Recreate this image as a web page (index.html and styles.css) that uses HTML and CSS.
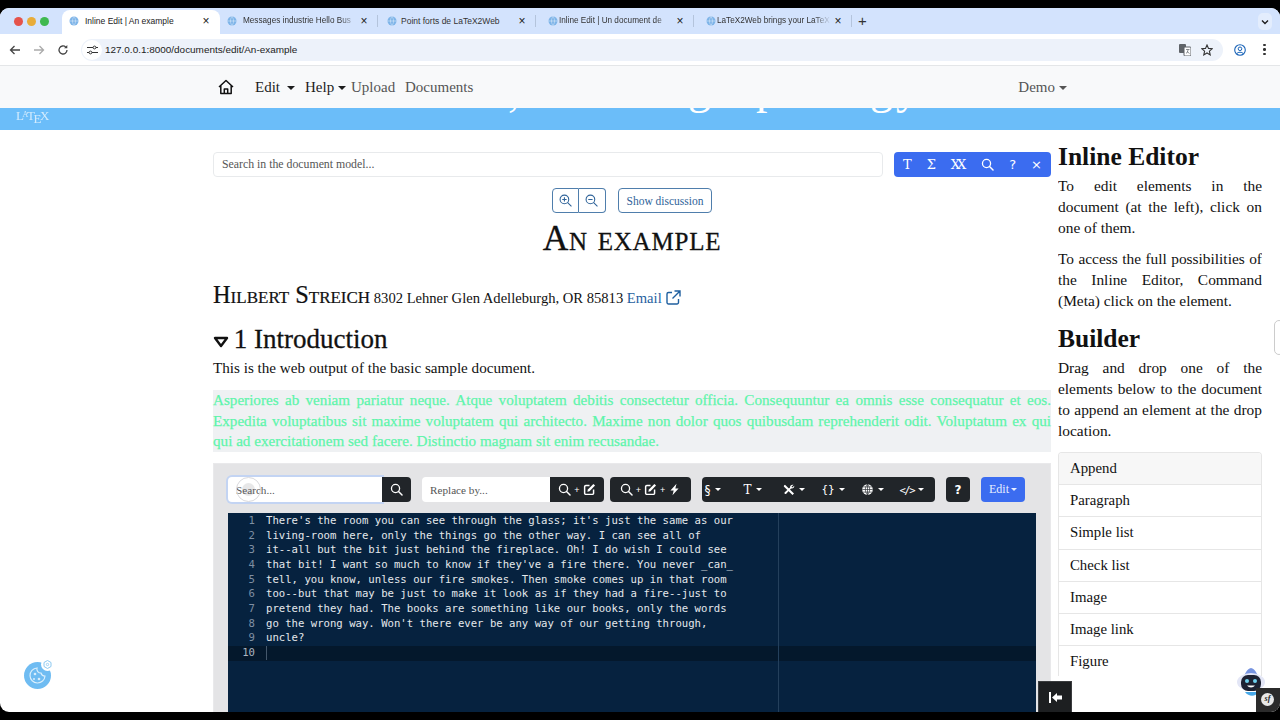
FILE: index.html
```html
<!DOCTYPE html>
<html lang="en">

<head>
	<meta charset="UTF-8" />
	<title>Inline Edit | An example</title>
	<link rel="stylesheet" href="styles.css">
</head>

<body>
	<svg class="sprites" width="0" height="0">
		<symbol id="search" viewBox="0 0 16 16">
			<circle cx="6.800" cy="6.800" r="5" fill="none" stroke="currentColor" stroke-width="1.600" />
			<path d="M10.500 10.500 14.800 14.800" stroke="currentColor" stroke-width="1.800" stroke-linecap="round" />
		</symbol>
		<symbol id="edit" viewBox="0 0 16 16">
			<path d="M8 3H3.500A1.500 1.500 0 0 0 2 4.500V12.500A1.500 1.500 0 0 0 3.500 14H11.500A1.500 1.500 0 0 0 13 12.500V8" fill="none" stroke="currentColor" stroke-width="1.800" />
			<path d="M12.800 1.200 14.800 3.200 8 10 5.300 10.700 6 8Z" fill="currentColor" />
		</symbol>
		<symbol id="bolt" viewBox="0 0 16 16">
			<path d="M10.500 1 3 9.200H7L5.500 15 13 6.800H9Z" fill="currentColor" />
		</symbol>
		<symbol id="globe-web" viewBox="0 0 16 16">
			<circle cx="8" cy="8" r="6.500" fill="currentColor" />
			<path d="M1.500 8H14.500M8 1.500V14.500M2.500 4.800H13.500M2.500 11.200H13.500M8 1.500C4.500 5 4.500 11 8 14.500M8 1.500C11.500 5 11.500 11 8 14.500" fill="none" stroke="#212529" stroke-width=".8" />
		</symbol>
		<symbol id="tab-globe" viewBox="0 0 10 10">
			<circle cx="5" cy="5" r="4.500" fill="#7db4e8" />
			<path d="M.5 5H9.500M5 .5C3 3 3 7 5 9.500M5 .5C7 3 7 7 5 9.500" fill="none" stroke="#d9e8f8" stroke-width=".6" />
		</symbol>
	</svg>

	<div class="window">
		<div class="tabstrip">
			<div class="lights">
				<span class="light red"></span>
				<span class="light yellow"></span>
				<span class="light green"></span>
			</div>
			<div class="tab active">
				<svg class="favicon"><use href="#tab-globe" /></svg>
				<span class="tab-title">Inline Edit | An example</span>
				<span class="tab-close">×</span>
			</div>
			<div class="tab">
				<svg class="favicon"><use href="#tab-globe" /></svg>
				<span class="tab-title faded">Messages industrie Hello Bus</span>
				<span class="tab-close">×</span>
			</div>
			<div class="tab third">
				<svg class="favicon"><use href="#tab-globe" /></svg>
				<span class="tab-title">Point forts de LaTeX2Web</span>
				<span class="tab-close">×</span>
			</div>
			<div class="tab shifted">
				<svg class="favicon"><use href="#tab-globe" /></svg>
				<span class="tab-title faded">Inline Edit | Un document de</span>
				<span class="tab-close">×</span>
			</div>
			<div class="tab shifted">
				<svg class="favicon"><use href="#tab-globe" /></svg>
				<span class="tab-title faded">LaTeX2Web brings your LaTeX</span>
				<span class="tab-close">×</span>
			</div>
			<span class="new-tab">+</span>
			<span class="tab-menu">
				<svg width="8" height="6" viewBox="0 0 8 6"><path d="M1 1.500 4 4.500 7 1.500" fill="none" stroke="#1f1f1f" stroke-width="1.400" /></svg>
			</span>
		</div>

		<div class="toolbar">
			<svg class="tool-icon" width="12" height="12" viewBox="0 0 12 12"><path d="M11 6H1.500M5.500 2 1.500 6 5.500 10" fill="none" stroke="#444" stroke-width="1.300" /></svg>
			<svg class="tool-icon" width="12" height="12" viewBox="0 0 12 12"><path d="M1 6H10.500M6.500 2 10.500 6 6.500 10" fill="none" stroke="#aaa" stroke-width="1.300" /></svg>
			<svg class="tool-icon" width="12" height="12" viewBox="0 0 12 12"><path d="M10 6A4 4 0 1 1 8.800 3.100" fill="none" stroke="#444" stroke-width="1.300" /><path d="M10.300 1V4.200H7.100Z" fill="#444" /></svg>
			<div class="omnibox">
				<span class="site-info">
					<svg width="11" height="10" viewBox="0 0 11 10"><path d="M0 2.500H6M9 2.500H11M0 7.500H2M5 7.500H11" stroke="#333" stroke-width="1.100" /><circle cx="7.500" cy="2.500" r="1.400" fill="none" stroke="#333" /><circle cx="3.500" cy="7.500" r="1.400" fill="none" stroke="#333" /></svg>
				</span>
				<span class="url">127.0.0.1:8000/documents/edit/An-example</span>
				<svg class="omni-icon" width="12" height="12" viewBox="0 0 12 12"><rect x="0" y="0" width="7" height="9" rx="1" fill="#5f6368" /><rect x="5" y="3" width="7" height="9" rx="1" fill="#fff" stroke="#5f6368" /><path d="M7 5.500H10.500M9 5.500C9 7.500 8 9 7 9.500M8 7.500 10.500 9.500" stroke="#5f6368" stroke-width=".7" fill="none" /></svg>
				<svg class="omni-icon" width="12" height="12" viewBox="0 0 12 12"><path d="M6 1 7.500 4.400 11.200 4.800 8.400 7.200 9.200 10.900 6 9 2.800 10.900 3.600 7.200 .8 4.800 4.500 4.400Z" fill="none" stroke="#333" stroke-width="1.100" /></svg>
			</div>
			<svg class="profile" width="12" height="12" viewBox="0 0 12 12"><circle cx="6" cy="6" r="5.300" fill="none" stroke="#1a64b8" stroke-width="1.100" /><circle cx="6" cy="4.800" r="1.800" fill="none" stroke="#1a64b8" /><path d="M2.800 9.500C4 7.800 8 7.800 9.200 9.500" fill="none" stroke="#1a64b8" /></svg>
			<span class="dots"><i></i><i></i><i></i></span>
		</div>

		<nav class="navbar">
			<svg class="home" width="16" height="16" viewBox="0 0 16 16"><path d="M1 8 8 1.500 15 8M2.800 6.800V14.500H13.200V6.800M6.300 14.500V10H9.700V14.500" fill="none" stroke="#111" stroke-width="1.500" stroke-linejoin="round" /></svg>
			<span class="nav-item dark edit-item">Edit<i class="caret"></i></span>
			<span class="nav-item dark help-item">Help<i class="caret"></i></span>
			<span class="nav-item upload-item">Upload</span>
			<span class="nav-item">Documents</span>
			<span class="nav-item demo-item">Demo<i class="caret"></i></span>
		</nav>

		<header class="hero">
			<span class="latex-logo">L<sup>A</sup>T<sub>E</sub>X</span>
			<span class="hero-clip comma">,</span>
			<span class="hero-clip gee-one">g</span>
			<span class="hero-clip pee">p</span>
			<span class="hero-clip gee-two">g</span>
			<span class="hero-clip wye">y</span>
		</header>

		<div class="page">
			<main class="doc">
				<div class="model-row">
					<input class="model-search" type="text" placeholder="Search in the document model...">
					<div class="blue-bar">
						<span>T</span><span>Σ</span><span class="tight">XX</span>
						<svg width="13" height="13"><use href="#search" /></svg>
						<span class="sans">?</span><span class="sans">×</span>
					</div>
				</div>

				<div class="zoom-row">
					<div class="btn-group">
						<button class="outline-btn square">
							<svg width="13" height="13" viewBox="0 0 12 12"><circle cx="5" cy="5" r="4" fill="none" stroke="currentColor" stroke-width="1" /><path d="M8 8 11.500 11.500M3 5H7M5 3V7" stroke="currentColor" stroke-width="1" /></svg>
						</button>
						<button class="outline-btn square">
							<svg width="13" height="13" viewBox="0 0 12 12"><circle cx="5" cy="5" r="4" fill="none" stroke="currentColor" stroke-width="1" /><path d="M8 8 11.500 11.500M3 5H7" stroke="currentColor" stroke-width="1" /></svg>
						</button>
					</div>
					<button class="outline-btn">Show discussion</button>
				</div>

				<h1 class="doc-title">An example</h1>

				<p class="author">
					<span class="author-name">Hilbert Streich</span>
					8302 Lehner Glen Adelleburgh, OR 85813
					<a class="mail">Email
						<svg width="15" height="15" viewBox="0 0 15 15"><path d="M6 2.500H2.500A1.500 1.500 0 0 0 1 4V12.500A1.500 1.500 0 0 0 2.500 14H11A1.500 1.500 0 0 0 12.500 12.500V9M8.500 1H14V6.500M14 1 6.500 8.500" fill="none" stroke="currentColor" stroke-width="1.400" /></svg>
					</a>
				</p>

				<h2 class="section-title">
					<svg width="16" height="12" viewBox="0 0 16 12"><path d="M2 2H14L8 10Z" fill="none" stroke="#111" stroke-width="2.400" stroke-linejoin="round" /></svg>
					1 Introduction
				</h2>
				<p class="intro">This is the web output of the basic sample document.</p>

				<p class="selected-par">Asperiores ab veniam pariatur neque. Atque voluptatem debitis consectetur officia. Consequuntur ea omnis esse consequatur et eos. Expedita voluptatibus sit maxime voluptatem qui architecto. Maxime non dolor quos quibusdam reprehenderit odit. Voluptatum ex qui qui ad exercitationem sed facere. Distinctio magnam sit enim recusandae.</p>

				<section class="editor">
					<div class="editor-tools">
						<div class="field-group search-group">
							<input class="field focused" type="text" placeholder="Search...">
							<button class="dark-btn"><svg width="13" height="13"><use href="#search" /></svg></button>
							<span class="ripple"></span>
						</div>
						<div class="field-group replace">
							<input class="field" type="text" placeholder="Replace by...">
							<button class="dark-btn">
								<svg width="13" height="13"><use href="#search" /></svg><b>+</b><svg width="13" height="13"><use href="#edit" /></svg>
							</button>
						</div>
						<button class="dark-btn all">
							<svg width="13" height="13"><use href="#search" /></svg><b>+</b><svg width="13" height="13"><use href="#edit" /></svg><b>+</b><svg width="13" height="13"><use href="#bolt" /></svg>
						</button>
						<div class="dark-btn menus">
							<span class="menu"><span class="sans">§</span><i class="caret"></i></span>
							<span class="menu"><span class="tee">T</span><i class="caret"></i></span>
							<span class="menu">
								<svg width="12" height="12" viewBox="0 0 12 12"><path d="M1 1.500 2 .8 11 9.500 9.500 11 .8 2.500ZM10.500 .8 8.500 2.800 9.200 3.500 11.300 1.800C11.500 3.500 10 5 8 4.500L3 10A1.300 1.300 0 0 1 1.500 8.500L7 3.500C6.800 1.800 8.500 .3 10.500 .8Z" fill="currentColor" /></svg>
								<i class="caret"></i>
							</span>
							<span class="menu"><span class="mono">{}</span><i class="caret"></i></span>
							<span class="menu"><svg width="13" height="13"><use href="#globe-web" /></svg><i class="caret"></i></span>
							<span class="menu"><span class="mono tag">&lt;/&gt;</span><i class="caret"></i></span>
						</div>
						<button class="dark-btn help">?</button>
						<button class="edit-btn">Edit<i class="caret"></i></button>
					</div>

					<div class="code">
						<div class="gutter">
							<span>1</span><span>2</span><span>3</span><span>4</span><span>5</span><span>6</span><span>7</span><span>8</span><span>9</span><span class="current">10</span>
						</div>
						<div class="lines">
							<div>There's the room you can see through the glass; it's just the same as our</div>
							<div>living-room here, only the things go the other way. I can see all of</div>
							<div>it--all but the bit just behind the fireplace. Oh! I do wish I could see</div>
							<div>that bit! I want so much to know if they've a fire there. You never _can_</div>
							<div>tell, you know, unless our fire smokes. Then smoke comes up in that room</div>
							<div>too--but that may be just to make it look as if they had a fire--just to</div>
							<div>pretend they had. The books are something like our books, only the words</div>
							<div>go the wrong way. Won't there ever be any way of our getting through,</div>
							<div>uncle?</div>
							<div class="active-line"><span class="cursor"></span></div>
						</div>
						<div class="print-margin"></div>
					</div>
				</section>
			</main>

			<aside class="side">
				<h2 class="side-title first">Inline Editor</h2>
				<p>To edit elements in the document (at the left), click on one of them.</p>
				<p>To access the full possibilities of the Inline Editor, Command (Meta) click on the element.</p>
				<h2 class="side-title">Builder</h2>
				<p>Drag and drop one of the elements below to the document to append an element at the drop location.</p>
				<ul class="builder">
					<li class="head">Append</li>
					<li>Paragraph</li>
					<li>Simple list</li>
					<li>Check list</li>
					<li>Image</li>
					<li>Image link</li>
					<li>Figure</li>
				</ul>
			</aside>
		</div>

		<!-- floating things above the page -->
		<div class="scroll-pill"></div>
		<div class="cookie">
			<svg width="27" height="27" viewBox="0 0 27 27"><circle cx="13.500" cy="13.500" r="13.500" fill="#6fbcf2" /><path d="M13 6A7.500 7.500 0 1 0 21 14 4 4 0 0 1 17 11 4 4 0 0 1 13 6Z" fill="none" stroke="#d9eefc" stroke-width="1.200" /><circle cx="11" cy="12" r="1.300" fill="#d9eefc" /><circle cx="15" cy="17" r="1.300" fill="#d9eefc" /><circle cx="10" cy="17" r="1" fill="#d9eefc" /></svg>
			<span class="cookie-gear">
				<svg width="9" height="9" viewBox="0 0 9 9"><path d="M4.500 .5 8 2.500V6.500L4.500 8.500 1 6.500V2.500Z" fill="none" stroke="#8cc8f0" /><circle cx="4.500" cy="4.500" r="1.200" fill="none" stroke="#8cc8f0" stroke-width=".8" /></svg>
			</span>
		</div>
		<button class="side-toggle">
			<svg width="13" height="11" viewBox="0 0 13 11"><path d="M0 0H2V11H0ZM3 5.500 8 1V3.500H13V7.500H8V10Z" fill="#fff" /></svg>
		</button>
		<svg class="robot" width="28" height="29" viewBox="0 0 28 29">
			<path d="M14 0C10 1 8 5 7 9H21C20 5 18 1 14 0Z" fill="#7794e0" />
			<ellipse cx="14" cy="14" rx="14" ry="9" fill="#e3e6f6" />
			<rect x="4" y="7" width="20" height="16" rx="7" fill="#1d2233" />
			<circle cx="10" cy="13" r="2" fill="#6fd0ee" />
			<circle cx="18" cy="13" r="2" fill="#6fd0ee" />
			<path d="M10 17.500C12 20 16 20 18 17.500Z" fill="#fff" />
			<path d="M8 24C12 29 18 29 22 24Z" fill="#46a8e8" />
		</svg>
		<div class="sf-tab"><span class="sf-logo">sf</span></div>
	</div>
</body>

</html>
```

FILE: styles.css
```css
* {
	box-sizing: border-box;
	margin: 0;
	padding: 0;
}

html,
body {
	height: 100%;
	overflow: hidden;
	background: #000;
}

body {
	padding: 8px 0;
	font-family: 'Liberation Serif', serif;
	color: #111;
}

.sprites {
	position: absolute;
}

.window {
	position: relative;
	height: 704px;
	display: flex;
	flex-direction: column;
	overflow: hidden;
	background: #fff;
	border-radius: 9px;
}

/* browser chrome */
.tabstrip {
	height: 26px;
	flex: none;
	display: flex;
	align-items: flex-end;
	background: #d3e3fd;
	font-family: 'Liberation Sans', sans-serif;
}

.lights {
	width: 62px;
	height: 26px;
	padding-left: 14px;
	display: flex;
	align-items: center;
	gap: 4px;
}

.light {
	width: 9px;
	height: 9px;
	border-radius: 50%;
}

.light.red {
	background: #e5534b;
}

.light.yellow {
	background: #e8ac3a;
}

.light.green {
	background: #3fb950;
}

.tab {
	position: relative;
	width: 158px;
	height: 24px;
	display: flex;
	align-items: center;
	padding: 0 7px 3px;
	font-size: 8.500px;
	color: #333;
}

.tab::after {
	content: "";
	position: absolute;
	right: 0;
	top: 5px;
	height: 12px;
	width: 1px;
	background: #b4c4dc;
}

.tab.active {
	background: #fff;
	color: #222;
	border-radius: 8px 8px 0 0;
}

.tab.active::after {
	display: none;
}

.tab.third {
	padding-left: 9px;
}

.tab.shifted {
	padding-left: 12px;
}

.favicon {
	width: 10px;
	height: 10px;
	flex: none;
	margin-right: 6px;
}

.tab.shifted .favicon {
	margin-right: 1px;
}

.tab.third .favicon {
	margin-right: 4px;
}

.tab-title {
	flex: 1;
	min-width: 0;
	white-space: nowrap;
}

.tab-title.faded {
	-webkit-mask-image: linear-gradient(90deg, #000 85%, transparent);
	mask-image: linear-gradient(90deg, #000 85%, transparent);
	font-size: 8.200px;
}

.tab-close {
	width: 14px;
	font-size: 12px;
	line-height: 12px;
	text-align: center;
	color: #222;
}

.new-tab {
	margin: 0 0 5px 6px;
	font-size: 15px;
	line-height: 16px;
	color: #333;
}

.tab-menu {
	width: 14px;
	height: 17px;
	margin: 0 8px 4px auto;
	display: flex;
	align-items: center;
	justify-content: center;
	background: #e3edfd;
	border-radius: 5px;
}

.toolbar {
	height: 32px;
	flex: none;
	display: flex;
	align-items: center;
	padding-left: 9px;
	background: #fff;
	border-bottom: 1px solid #e4e6e8;
}

.tool-icon {
	margin-right: 12px;
}

.omnibox {
	width: 1142px;
	height: 22px;
	display: flex;
	align-items: center;
	background: #edf2fa;
	border-radius: 11px;
	font-family: 'Liberation Sans', sans-serif;
	font-size: 9.950px;
	color: #222;
}

.site-info {
	width: 20px;
	height: 20px;
	margin: 0 3px 0 1px;
	display: flex;
	align-items: center;
	justify-content: center;
	background: #fff;
	border-radius: 50%;
}

.url {
	flex: 1;
}

.omni-icon {
	margin-right: 10px;
}

.profile {
	margin-left: 11px;
}

.dots {
	margin-left: 17px;
	display: flex;
	flex-direction: column;
	gap: 2px;
}

.dots i {
	width: 2.500px;
	height: 2.500px;
	background: #333;
	border-radius: 50%;
}

/* site navbar */
.navbar {
	height: 42px;
	flex: none;
	display: flex;
	align-items: center;
	padding-left: 218px;
	background: #f8f9fa;
}

.nav-item {
	font-size: 15px;
	color: #555;
}

.nav-item.dark {
	color: #1c1c1c;
}

.home {
	margin-right: 21px;
}

.edit-item {
	width: 50px;
}

.help-item {
	width: 46px;
}

.upload-item {
	width: 54px;
}

.demo-item {
	margin-left: auto;
	margin-right: 213px;
}

.caret {
	display: inline-block;
	margin-left: 4px;
	vertical-align: 2px;
	border-top: 4.500px solid currentColor;
	border-left: 4.500px solid transparent;
	border-right: 4.500px solid transparent;
}

.edit-item .caret {
	margin-left: 7px;
}

.hero {
	position: relative;
	height: 22px;
	flex: none;
	overflow: hidden;
	background: #6bbdf9;
	color: #fff;
}

.latex-logo {
	position: absolute;
	left: 16px;
	top: -1px;
	font-size: 13px;
	line-height: 15px;
	opacity: .7;
	letter-spacing: -1.400px;
}

.latex-logo sup {
	font-size: 8px;
	vertical-align: 3px;
}

.latex-logo sub {
	font-size: 13px;
	vertical-align: -3px;
}

.hero-clip {
	position: absolute;
	top: -47px;
	font-size: 46px;
	line-height: 54px;
}

.comma {
	left: 508px;
	top: -44px;
}

.gee-one {
	left: 688px;
}

.pee {
	left: 756px;
}

.gee-two {
	left: 870px;
}

.wye {
	left: 896px;
}

/* page columns */
.page {
	flex: 1;
	min-height: 0;
	display: grid;
	grid-template-columns: 838px 204px;
	column-gap: 7px;
	padding-left: 213px;
	overflow: hidden;
}

.doc {
	padding-top: 22px;
	min-width: 0;
}

.model-row {
	display: flex;
	justify-content: space-between;
}

.model-search {
	width: 670px;
	height: 25px;
	padding: 0 8px;
	border: 1px solid #e8eaec;
	border-radius: 4px;
	font: 11.800px 'Liberation Serif', serif;
}

.model-search::placeholder,
.field::placeholder {
	color: #555;
}

.blue-bar {
	width: 157px;
	height: 25px;
	display: flex;
	align-items: center;
	justify-content: space-between;
	padding: 0 9px;
	background: #3b6cf0;
	border-radius: 4px;
	color: #fff;
	font: 13px 'DejaVu Serif', serif;
}

.tight {
	letter-spacing: -3px;
	margin-right: 3px;
}

.sans {
	font-family: 'DejaVu Sans', sans-serif;
}

.zoom-row {
	margin-top: 11px;
	padding-left: 339px;
	display: flex;
	gap: 12px;
}

.btn-group {
	display: flex;
}

.outline-btn {
	height: 25px;
	padding: 0 7.500px;
	display: flex;
	align-items: center;
	background: #fff;
	border: 1px solid #4f7eac;
	border-radius: 4px;
	color: #2f6399;
	font: 11.500px 'Liberation Serif', serif;
}

.outline-btn.square {
	width: 27px;
	padding: 0 6px;
}

.btn-group .outline-btn:first-child {
	border-radius: 4px 0 0 4px;
}

.btn-group .outline-btn:last-child {
	border-left: none;
	border-radius: 0 4px 4px 0;
}

.doc-title {
	margin-top: 3px;
	text-align: center;
	font-size: 35.500px;
	line-height: 44px;
	font-weight: 400;
	font-variant: small-caps;
	letter-spacing: .8px;
	-webkit-text-stroke: .3px #111;
}

.author {
	margin-top: 20px;
	font-size: 14.600px;
	line-height: 30px;
}

.author-name {
	font-size: 24.400px;
	font-variant: small-caps;
	-webkit-text-stroke: .2px #111;
}

.mail {
	color: #1f5f9f;
}

.mail svg {
	vertical-align: -2px;
	margin-left: 1px;
}

.section-title {
	margin-top: 10px;
	font-size: 27px;
	line-height: 32px;
	font-weight: 400;
	-webkit-text-stroke: .3px #111;
}

.section-title svg {
	margin-right: -2px;
}

.intro {
	margin-top: 2px;
	font-size: 15.150px;
	line-height: 21px;
}

.selected-par {
	margin-top: 12px;
	background: #eff1f3;
	color: #5ef5ab;
	font-size: 15.150px;
	line-height: 20.700px;
	text-align: justify;
	-webkit-text-stroke: .25px #5ef5ab;
}

.editor {
	height: 260px;
	margin-top: 11px;
	padding: 13px 14px 0;
	background: #e4e4e6;
	border: 1px solid #e9e9eb;
}

.editor-tools {
	display: flex;
	align-items: stretch;
	height: 25px;
}

.field-group {
	position: relative;
	display: flex;
	flex: none;
}

.field {
	width: 154px;
	height: 25px;
	padding: 0 8px;
	background: #fff;
	border: none;
	border-radius: 4px 0 0 4px;
	font: 11.200px 'Liberation Serif', serif;
}

.field.focused {
	box-shadow: 0 0 0 2px #c3d4f3;
}

.ripple {
	position: absolute;
	left: 8px;
	top: 0;
	width: 25px;
	height: 25px;
	border: 1px solid #d9d9dd;
	border-radius: 50%;
}

.ripple::after {
	content: "";
	position: absolute;
	left: 5px;
	top: 5px;
	width: 13px;
	height: 13px;
	background: rgba(120, 120, 130, .18);
	border-radius: 50%;
}

.replace {
	margin-left: 11px;
}

.replace .field {
	width: 128px;
}

.dark-btn {
	height: 25px;
	padding: 0 8px;
	display: flex;
	align-items: center;
	justify-content: center;
	flex: none;
	background: #212529;
	border: none;
	border-radius: 0 4px 4px 0;
	color: #fff;
}

.replace .dark-btn {
	width: 54px;
	padding: 0;
}

.dark-btn b {
	margin: 0 3px;
	font: 9px 'Liberation Sans', sans-serif;
}

.dark-btn.all {
	width: 81px;
	margin-left: 6px;
	padding: 0;
	border-radius: 4px;
}

.dark-btn.menus {
	width: 233px;
	margin-left: 11px;
	display: grid;
	grid-template-columns: repeat(6, 39px);
	padding: 0 0 0 6px;
	border-radius: 4px;
	font-size: 12px;
}

.menu {
	display: flex;
	align-items: center;
}

.menu .caret {
	margin-left: 4px;
	vertical-align: 0;
	border-top-width: 3px;
	border-left-width: 3px;
	border-right-width: 3px;
}

.tee {
	font-family: 'DejaVu Serif', serif;
}

.mono {
	font-family: 'DejaVu Sans Mono', monospace;
	font-size: 11px;
}

.mono.tag {
	font-size: 10.500px;
	letter-spacing: -1.500px;
}

.dark-btn.help {
	width: 24px;
	margin-left: 11px;
	padding: 0;
	border-radius: 4px;
	font: 700 12px 'DejaVu Sans', sans-serif;
}

.edit-btn {
	width: 44px;
	margin-left: 11px;
	background: #3b6cf0;
	border: none;
	border-radius: 4px;
	color: #e8eeff;
	font: 12px 'Liberation Serif', serif;
}

.edit-btn .caret {
	margin-left: 2px;
	border-top-width: 3px;
	border-left-width: 3px;
	border-right-width: 3px;
}

.code {
	position: relative;
	height: 210px;
	margin-top: 11px;
	display: flex;
	background: #06223f;
	font: 10.630px/14.670px 'DejaVu Sans Mono', monospace;
	color: #e4e8ec;
}

.gutter {
	width: 38px;
	flex: none;
	padding: 1px 11px 0 0;
	display: flex;
	flex-direction: column;
	align-items: flex-end;
	color: #7f8fa3;
}

.gutter .current {
	position: relative;
	z-index: 1;
	color: #aab4c0;
}

.gutter span {
	height: 14.670px;
}

.lines {
	flex: 1;
	padding-top: 1px;
}

.lines div {
	height: 14.670px;
	white-space: pre;
}

.active-line {
	position: relative;
	background: #04182c;
}

.active-line::before {
	content: "";
	position: absolute;
	top: 0;
	bottom: 0;
	left: -38px;
	width: 38px;
	background: #04182c;
}

.cursor {
	display: block;
	width: 1px;
	height: 14px;
	background: #44576b;
}

.print-margin {
	position: absolute;
	left: 550px;
	top: 0;
	bottom: 0;
	width: 1px;
	background: #24405c;
}

/* right sidebar */
.side {
	min-width: 0;
	font-size: 15.400px;
	line-height: 21px;
	overflow: hidden;
}

.side p {
	margin-bottom: 10px;
	text-align: justify;
}

.side-title {
	margin: 12px 0 2px;
	font-size: 25.500px;
	line-height: 32px;
	font-weight: 700;
}

.side-title.first {
	margin-top: 11px;
	margin-bottom: 2px;
}

.builder {
	list-style: none;
	height: 224px;
	margin-top: 11px;
	overflow: hidden;
	border-radius: 4px 4px 0 0;
	border: 1px solid #e6e6e6;
	border-bottom: none;
	font-size: 14.800px;
}

.builder li {
	height: 32.200px;
	padding: 0 11px;
	line-height: 31px;
	border-bottom: 1px solid #e6e6e6;
}

.builder li:last-child {
	border-bottom: none;
}

.builder .head {
	background: #f7f7f7;
}

/* floating */
.scroll-pill {
	position: absolute;
	left: 1274px;
	top: 312px;
	width: 10px;
	height: 35px;
	background: #fff;
	border: 1px solid #ccc;
	border-radius: 5px;
}

.cookie {
	position: absolute;
	left: 24px;
	top: 654px;
	width: 27px;
	height: 27px;
}

.cookie-gear {
	position: absolute;
	right: -3px;
	top: -4px;
	width: 13px;
	height: 13px;
	display: flex;
	align-items: center;
	justify-content: center;
	background: #fff;
	border-radius: 50%;
}

.side-toggle {
	position: absolute;
	left: 1038px;
	bottom: 0;
	width: 34px;
	height: 31px;
	display: flex;
	align-items: center;
	justify-content: center;
	background: #1d1f21;
	border: 1px solid #3a3c3e;
	border-bottom: none;
}

.robot {
	position: absolute;
	left: 1237px;
	top: 660px;
}

.sf-tab {
	position: absolute;
	right: 0;
	bottom: 0;
	width: 24px;
	height: 24px;
	padding: 5px 0 0 5px;
	background: #2b2b2b;
}

.sf-logo {
	display: block;
	width: 13px;
	height: 13px;
	background: #e8e8e8;
	border-radius: 50%;
	color: #222;
	font: italic 700 8px/12px 'Liberation Serif', serif;
	text-align: center;
}
```
